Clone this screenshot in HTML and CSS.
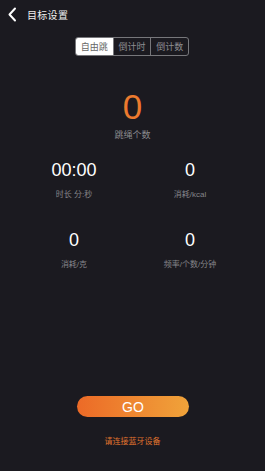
FILE: index.html
```html
<!DOCTYPE html>
<html lang="zh">
<head>
  <meta charset="UTF-8">
  <title>目标设置</title>
  <link rel="stylesheet" href="styles.css">
</head>
<body>
  <div class="header">
    <svg class="back" width="10" height="15" viewBox="0 0 10 15">
      <path d="M8 1.5 L2.5 7.5 L8 13.5" fill="none" stroke="#fff" stroke-width="2" stroke-linecap="round" stroke-linejoin="round"/>
    </svg>
    <span class="title">目标设置</span>
  </div>
  <div class="tabs">
    <div class="tab active">自由跳</div>
    <div class="tab">倒计时</div>
    <div class="tab">倒计数</div>
  </div>
  <div class="count">
    <div class="count-num">0</div>
    <div class="count-label">跳绳个数</div>
  </div>
  <div class="stats">
    <div class="stat">
      <div class="stat-num">00:00</div>
      <div class="stat-label">时长 分:秒</div>
    </div>
    <div class="stat">
      <div class="stat-num">0</div>
      <div class="stat-label">消耗/kcal</div>
    </div>
    <div class="stat">
      <div class="stat-num">0</div>
      <div class="stat-label">消耗/克</div>
    </div>
    <div class="stat">
      <div class="stat-num">0</div>
      <div class="stat-label">频率/个数/分钟</div>
    </div>
  </div>
  <div class="bottom">
    <button class="go">GO</button>
    <div class="hint">请连接蓝牙设备</div>
  </div>
</body>
</html>
```

FILE: styles.css
```css
* { margin: 0; padding: 0; box-sizing: border-box; }
body {
  font-family: "Liberation Sans", "Noto Sans CJK SC", sans-serif;
  background: #1b1a20;
  color: #fff;
  width: 265px;
  height: 471px;
  overflow: hidden;
}
.header {
  display: flex;
  align-items: center;
  height: 28px;
  padding-left: 7px;
}
.back { display: block; }
.title {
  margin-left: 10px;
  font-size: 10px;
  letter-spacing: 0.3px;
  color: #eee;
}
.tabs {
  display: flex;
  width: 114px;
  height: 19px;
  margin: 9px 0 0 75px;
  border: 1px solid #77777b;
  border-radius: 3px;
  overflow: hidden;
}
.tab {
  flex: 1;
  display: flex;
  align-items: center;
  justify-content: center;
  font-size: 9px;
  color: #8d8d92;
  border-left: 1px solid #77777b;
}
.tab:first-child { border-left: none; }
.tab.active {
  background: #fff;
  color: #666;
}
.count {
  display: flex;
  flex-direction: column;
  align-items: center;
  margin-top: 33px;
}
.count-num {
  font-size: 35px;
  line-height: 36px;
  color: #ec7a2e;
}
.count-label {
  margin-top: 3px;
  font-size: 9px;
  color: #8a8a8f;
}
.stats {
  display: grid;
  grid-template-columns: 116px 116px;
  row-gap: 31px;
  margin: 19px 0 0 16px;
}
.stat {
  display: flex;
  flex-direction: column;
  align-items: center;
}
.stat-num {
  font-size: 18px;
  line-height: 20px;
}
.stat-label {
  margin-top: 8px;
  font-size: 8px;
  color: #85858a;
}
.bottom {
  display: flex;
  flex-direction: column;
  align-items: center;
  margin-top: 127px;
}
.go {
  width: 112px;
  height: 21px;
  margin-left: 1px;
  border: none;
  border-radius: 11px;
  background: linear-gradient(90deg, #ec6a27, #f0a33a);
  color: #fff;
  font-family: "Liberation Sans", sans-serif;
  font-size: 14px;
}
.hint {
  margin-top: 18px;
  font-size: 8px;
  color: #e0742e;
}
```
